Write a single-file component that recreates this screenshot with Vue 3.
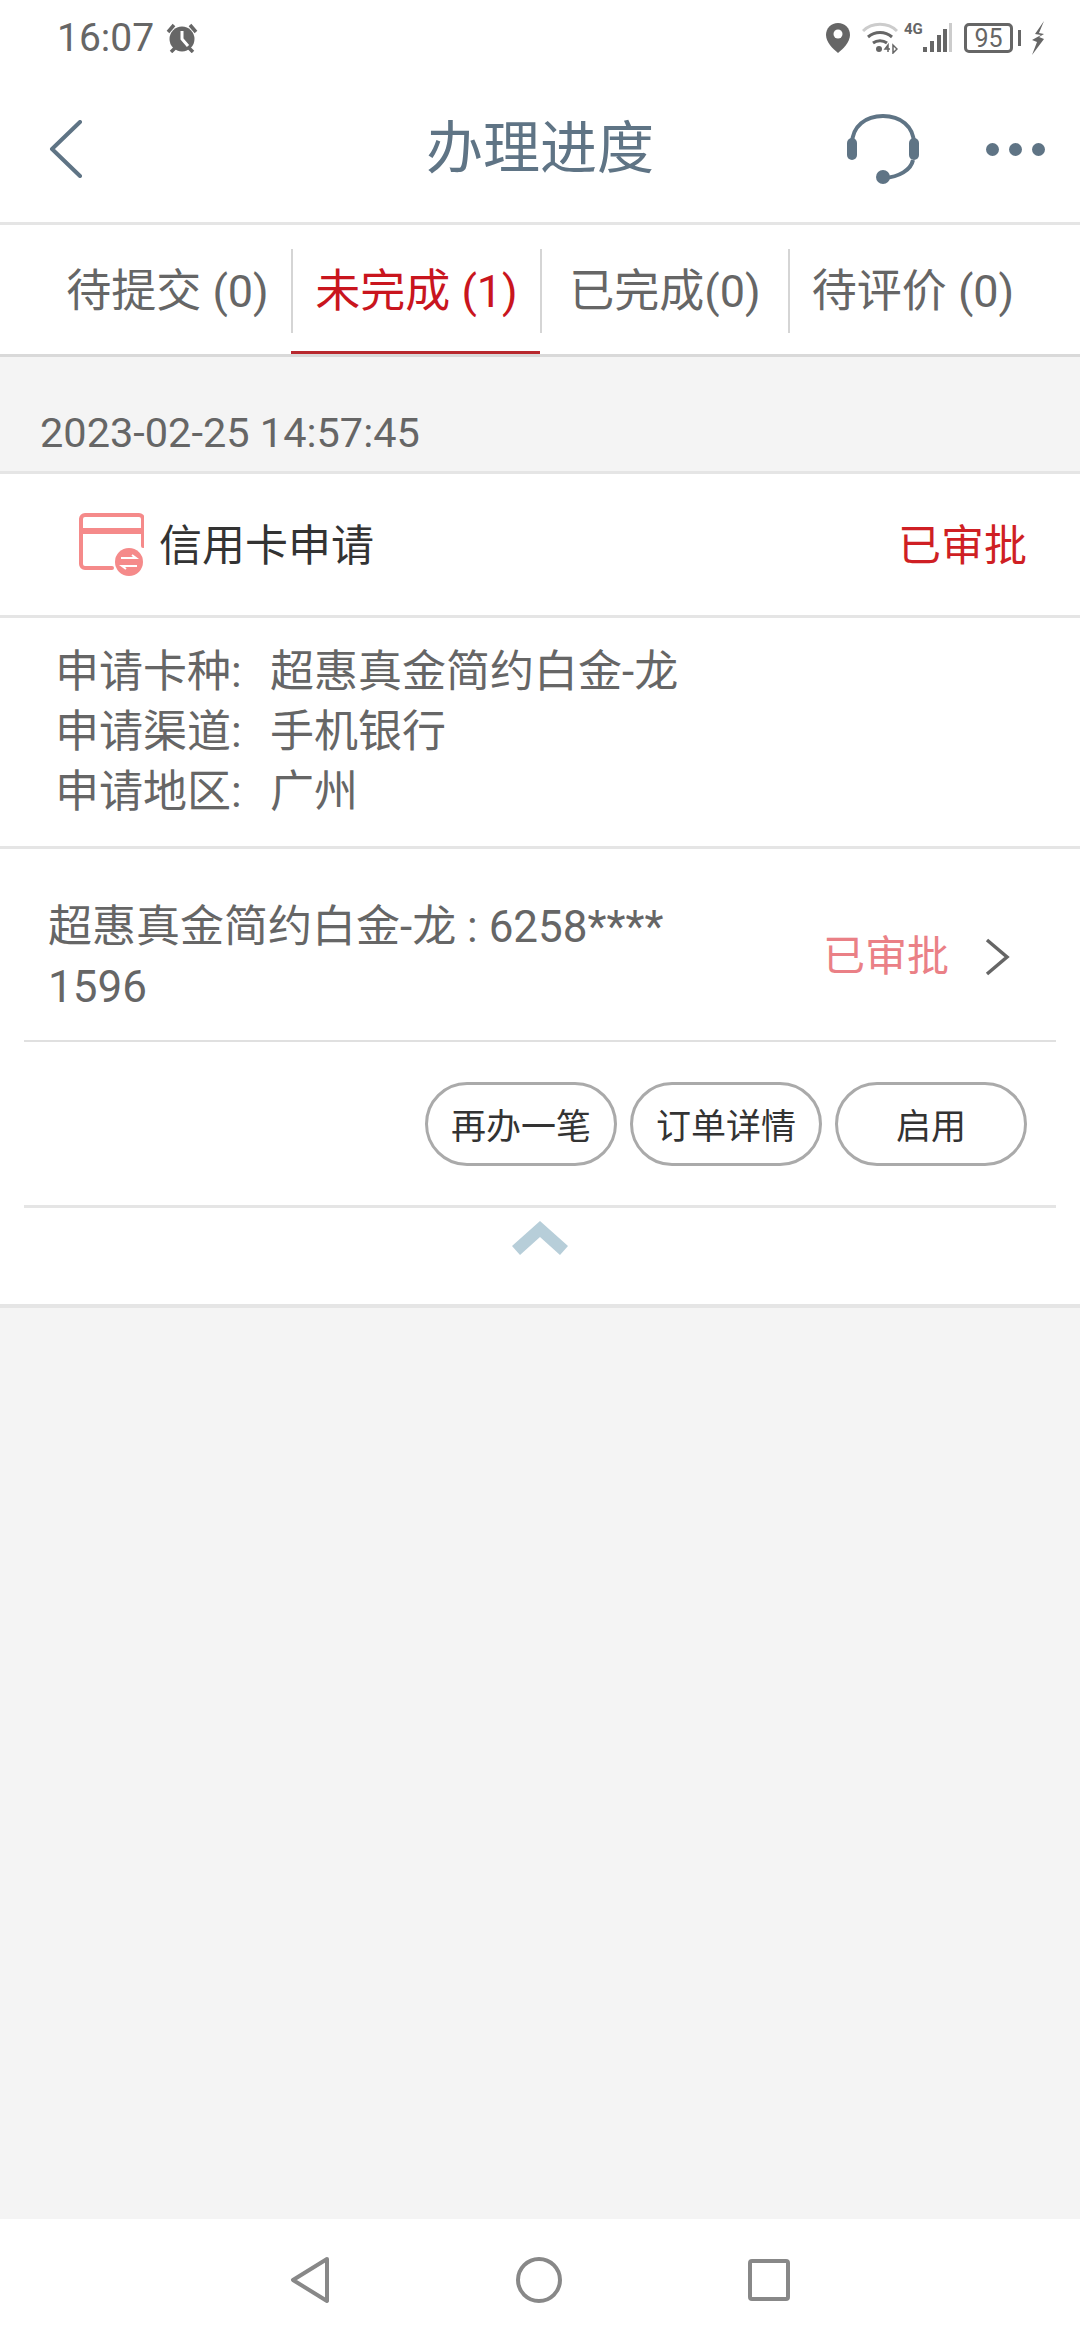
<script setup>
const tabs = [
  { label: '待提交 (0)', active: false },
  { label: '未完成 (1)', active: true },
  { label: '已完成(0)', active: false },
  { label: '待评价 (0)', active: false },
]

const details = [
  { name: '申请卡种', value: '超惠真金简约白金-龙' },
  { name: '申请渠道', value: '手机银行' },
  { name: '申请地区', value: '广州' },
]

const actions = ['再办一笔', '订单详情', '启用']
</script>

<template>
  <div class="page">
    <div class="status-bar">
      <span class="time">16:07</span>
      <svg class="alarm" width="32" height="30" viewBox="0 0 32 30">
        <circle cx="16" cy="16" r="12.5" fill="#666" />
        <path d="M16 8v8l6 7" fill="none" stroke="#fff" stroke-width="3" />
        <path d="M2 9l6-7M30 9l-6-7M5 29l4-4M27 29l-4-4" stroke="#666" stroke-width="3.5" fill="none" />
      </svg>
      <div class="status-right">
        <svg width="26" height="32" viewBox="0 0 26 32">
          <path d="M13 1C6 1 1 6 1 13c0 7 7 14 12 18 5-4 12-11 12-18C25 6 20 1 13 1z" fill="#666" />
          <circle cx="13" cy="12" r="4.5" fill="#fff" />
        </svg>
        <svg class="wifi" width="36" height="32" viewBox="0 0 36 32">
          <path d="M1 9C10 0 26 0 35 9" fill="none" stroke="#ccc" stroke-width="3" />
          <path d="M6 15c7-6 17-6 24 0" fill="none" stroke="#666" stroke-width="3" />
          <path d="M11 21c4-3 10-3 14 0" fill="none" stroke="#666" stroke-width="3" />
          <circle cx="17" cy="27" r="3" fill="#666" />
          <path d="M26 30v-7l-3 4h5M31 23v8l4-4z" fill="none" stroke="#666" stroke-width="1.5" />
        </svg>
        <div class="signal">
          <span class="net">4G</span>
          <svg width="30" height="30" viewBox="0 0 30 30">
            <rect x="1" y="24" width="4" height="5" fill="#666" />
            <rect x="8" y="18" width="4" height="11" fill="#666" />
            <rect x="15" y="12" width="4" height="17" fill="#666" />
            <rect x="21" y="6" width="4" height="23" fill="#666" />
            <rect x="27" y="0" width="3" height="29" fill="#ccc" />
          </svg>
        </div>
        <div class="battery"><span>95</span></div>
        <span class="battery-nub"></span>
        <svg class="bolt" width="14" height="34" viewBox="0 0 14 34">
          <path d="M13 0L4 13l6 1-9 5 5 2-5 13 12-16-5-2 5-3-5-1z" fill="#666" />
        </svg>
      </div>
    </div>

    <div class="app-header">
      <svg class="back" width="34" height="58" viewBox="0 0 34 58">
        <path d="M31 2L3 29l28 27" fill="none" stroke="#5f7485" stroke-width="4" stroke-linecap="round" stroke-linejoin="round" />
      </svg>
      <h1 class="title">办理进度</h1>
      <svg class="headset" width="74" height="70" viewBox="0 0 74 70">
        <path d="M6 32V30C6 12 20 2 37 2s31 10 31 28v2" fill="none" stroke="#5f7485" stroke-width="4" />
        <rect x="1" y="24" width="10" height="22" rx="5" fill="#5f7485" />
        <rect x="63" y="24" width="10" height="22" rx="5" fill="#5f7485" />
        <path d="M67 46c-2 10-14 17-29 18" fill="none" stroke="#5f7485" stroke-width="4" />
        <circle cx="37" cy="63" r="7" fill="#5f7485" />
      </svg>
      <div class="more"><i></i><i></i><i></i></div>
    </div>

    <div class="tabs">
      <div v-for="tab in tabs" :key="tab.label" class="tab" :class="{ active: tab.active }">
        <span class="tab-label">{{ tab.label }}</span>
      </div>
    </div>

    <div class="date">2023-02-25 14:57:45</div>

    <div class="card">
      <div class="card-head">
        <svg class="card-icon" width="66" height="64" viewBox="0 0 66 64">
          <path d="M34 55H7a4 4 0 0 1-4-4V6a4 4 0 0 1 4-4h54a4 4 0 0 1 4 4v27" fill="none" stroke="#f58a8a" stroke-width="4" stroke-linecap="round" />
          <rect x="3" y="15" width="62" height="6" fill="#f58a8a" />
          <circle cx="51" cy="49" r="14" fill="#f58a8a" />
          <path d="M43 45h15l-4-3M59 53H44l4 3" fill="none" stroke="#fff" stroke-width="2" />
        </svg>
        <span class="card-name">信用卡申请</span>
        <span class="card-state">已审批</span>
      </div>

      <div class="details">
        <div v-for="row in details" :key="row.name" class="detail-row">
          <span class="detail-name">{{ row.name }}:</span>
          <span>{{ row.value }}</span>
        </div>
      </div>

      <div class="product">
        <div class="product-name">超惠真金简约白金-龙 : 6258**** 1596</div>
        <span class="product-state">已审批</span>
        <svg width="26" height="38" viewBox="0 0 26 38">
          <path d="M3 2l20 17L3 36" fill="none" stroke="#666" stroke-width="3.5" />
        </svg>
      </div>

      <div class="actions">
        <button v-for="a in actions" :key="a" class="action" type="button">{{ a }}</button>
      </div>

      <div class="collapse">
        <svg width="56" height="34" viewBox="0 0 56 34">
          <path d="M28 0L56 25l-8 9-20-18L8 34l-8-9z" fill="#b7ced9" />
        </svg>
      </div>
    </div>

    <div class="spacer"></div>

    <div class="sys-nav">
      <svg width="40" height="48" viewBox="0 0 40 48">
        <path d="M37 3L3 24l34 21z" fill="none" stroke="#888" stroke-width="4" stroke-linejoin="round" />
      </svg>
      <svg width="46" height="46" viewBox="0 0 46 46">
        <circle cx="23" cy="23" r="21" fill="none" stroke="#888" stroke-width="4" />
      </svg>
      <svg width="42" height="42" viewBox="0 0 42 42">
        <rect x="2" y="2" width="38" height="38" rx="2" fill="none" stroke="#888" stroke-width="4" />
      </svg>
    </div>
  </div>
</template>

<style>
html,
body {
  margin: 0;
  background: #f4f4f4;
}
</style>

<style scoped>
.page {
  width: 1080px;
  height: 2340px;
  display: flex;
  flex-direction: column;
  background: #f4f4f4;
  font-family: Roboto, "Noto Sans CJK SC", sans-serif;
  color: #666;
  overflow: hidden;
}

.status-bar {
  height: 76px;
  flex: none;
  box-sizing: border-box;
  padding: 0 35px 0 57px;
  display: flex;
  align-items: center;
  background: #fff;
}

.time {
  font-size: 39px;
  line-height: 76px;
}

.alarm {
  margin-left: 12px;
}

.status-right {
  margin-left: auto;
  display: flex;
  align-items: center;
}

.wifi {
  margin-left: 11px;
}

.signal {
  position: relative;
  width: 30px;
  margin-left: 24px;
  display: flex;
}

.net {
  position: absolute;
  left: -18px;
  top: -3px;
  font-size: 15px;
  font-weight: 700;
  line-height: 18px;
}

.battery {
  width: 49px;
  height: 30px;
  margin-left: 12px;
  box-sizing: border-box;
  border: 3px solid #666;
  border-radius: 5px;
  display: flex;
  align-items: center;
  justify-content: center;
  font-size: 25px;
}

.battery-nub {
  width: 3px;
  height: 16px;
  margin-left: 5px;
  background: #666;
}

.bolt {
  margin-left: 10px;
}

.app-header {
  height: 149px;
  flex: none;
  box-sizing: border-box;
  position: relative;
  display: flex;
  align-items: center;
  background: #fff;
  border-bottom: 3px solid #e5e5e5;
  color: #5f7485;
}

.back {
  margin-left: 49px;
}

.title {
  position: absolute;
  left: 0;
  right: 0;
  top: 26px;
  margin: 0;
  text-align: center;
  font-size: 57px;
  font-weight: 400;
}

.headset {
  margin-left: auto;
}

.more {
  margin: 0 35px 0 66px;
  display: flex;
  gap: 10px;
}

.more i {
  width: 13px;
  height: 13px;
  border-radius: 50%;
  background: #5f7485;
}

.tabs {
  height: 132px;
  flex: none;
  box-sizing: border-box;
  padding: 0 44px 0 0;
  display: grid;
  grid-template-columns: 291px 249px 248px 248px;
  background: #fff;
  border-bottom: 3px solid #d9d9d9;
}

.tab {
  padding-top: 24px;
  box-sizing: border-box;
  height: 129px;
}

.tab:first-child {
  padding-left: 44px;
}

.tab.active {
  color: #c9151e;
  border-bottom: 3px solid #b8282e;
}

.tab-label {
  height: 84px;
  box-sizing: border-box;
  display: flex;
  align-items: center;
  justify-content: center;
  padding-bottom: 8px;
  font-size: 45px;
  white-space: nowrap;
}

.tab + .tab .tab-label {
  border-left: 2px solid #d5d5d5;
}

.date {
  height: 114px;
  flex: none;
  box-sizing: border-box;
  padding: 36px 0 0 40px;
  font-size: 41.5px;
  line-height: 80px;
  white-space: nowrap;
}

.card {
  flex: none;
  background: #fff;
  border-top: 3px solid #e5e5e5;
  border-bottom: 4px solid #e5e5e5;
}

.card-head {
  height: 144px;
  box-sizing: border-box;
  padding: 0 53px 6px 78px;
  display: flex;
  align-items: center;
  border-bottom: 3px solid #e5e5e5;
}

.card-icon {
  margin-top: 6px;
}

.card-name {
  margin-left: 15px;
  font-size: 43px;
  color: #333;
}

.card-state {
  margin-left: auto;
  font-size: 43px;
  color: #cf1f24;
}

.details {
  height: 231px;
  box-sizing: border-box;
  padding: 24px 0 0 55px;
  border-bottom: 3px solid #e5e5e5;
  font-size: 44px;
  line-height: 60px;
}

.detail-row {
  display: flex;
}

.detail-name {
  width: 215px;
}

.product {
  height: 193px;
  margin: 0 24px;
  box-sizing: border-box;
  padding: 24px 0 0 24px;
  display: flex;
  align-items: center;
  border-bottom: 2px solid #e0e0e0;
  font-size: 44px;
  line-height: 60px;
}

.product-name {
  width: 680px;
}

.product-state {
  margin: 0 35px 0 95px;
  font-size: 42px;
  color: #ea8086;
}

.actions {
  height: 166px;
  margin: 0 24px;
  box-sizing: border-box;
  padding: 0 29px 0 0;
  display: flex;
  align-items: center;
  justify-content: flex-end;
  gap: 13px;
  border-bottom: 3px solid #e5e5e5;
}

.action {
  width: 192px;
  height: 84px;
  padding: 0;
  box-sizing: border-box;
  border: 3px solid #aaa;
  border-radius: 42px;
  background: #fff;
  font-family: inherit;
  font-size: 35px;
  color: #333;
}

.collapse {
  height: 96px;
  box-sizing: border-box;
  padding-top: 13px;
  display: flex;
  justify-content: center;
  align-items: flex-start;
}

.spacer {
  flex: 1;
}

.sys-nav {
  height: 121px;
  flex: none;
  box-sizing: border-box;
  display: flex;
  align-items: center;
  background: #fff;
  padding-left: 290px;
  gap: 186px;
}
</style>
